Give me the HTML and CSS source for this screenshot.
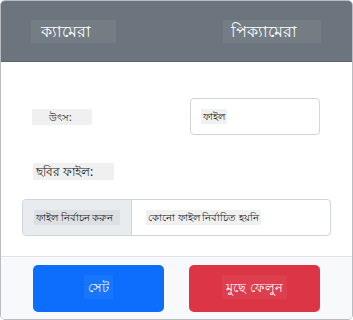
FILE: index.html
```html
<!DOCTYPE html>
<html lang="bn">
<head>
<meta charset="UTF-8" />
<title>ক্যামেরা</title>
<link rel="stylesheet" href="styles.css">
</head>
<body>

<div class="card">
  <div class="card-head">
    <span class="tab tab-cam">ক্যামেরা</span>
    <span class="tab tab-pi">পিক্যামেরা</span>
  </div>

  <div class="card-body">
    <div class="row-src">
      <span class="lbl small">উৎস:</span>
      <div class="select"><span class="lbl tiny">ফাইল</span></div>
    </div>

    <div class="row-img">
      <span class="lbl">ছবির ফাইল:</span>
    </div>

    <div class="file-input">
      <div class="file-btn"><span class="lbl tiny">ফাইল নির্বাচন করুন</span></div>
      <div class="file-name"><span class="lbl tiny">কোনো ফাইল নির্বাচিত হয়নি</span></div>
    </div>
  </div>

  <div class="card-foot">
    <button class="btn btn-blue"><span class="btn-txt">সেট</span></button>
    <button class="btn btn-red"><span class="btn-txt">মুছে ফেলুন</span></button>
  </div>
</div>

</body>
</html>
```

FILE: styles.css
```css
body {
  margin: 0;
  font-family: "Noto Sans", "DejaVu Sans", sans-serif;
  background: #fff;
}
.card {
  width: 351px;
  height: 318px;
  border: 1px solid #b9bcc0;
  border-radius: 5px;
  overflow: hidden;
  display: flex;
  flex-direction: column;
}
.card-head {
  background: #6c757d;
  height: 60px;
  display: flex;
  align-items: center;
  justify-content: space-between;
  padding: 0 31px 0 30px;
  border-bottom: 1px solid #5c636a;
}
.tab {
  background: rgba(255, 255, 255, 0.06);
  color: #fff;
  font-size: 16px;
  line-height: 23px;
  height: 23px;
  box-sizing: border-box;
}
.tab-cam {
  width: 85px;
  padding-left: 10px;
}
.tab-pi {
  width: 98px;
  padding-left: 8px;
}
.card-body {
  flex: 1;
  background: #fff;
  padding: 36px 21px 0 21px;
}
.lbl {
  background: #f0f0f0;
  color: #222;
  font-size: 12px;
  line-height: 17px;
  padding: 0 3px;
  display: inline-block;
}
.lbl.small {
  font-size: 10px;
  line-height: 16px;
  padding: 0 10px 0 17px;
  width: 33px;
}
.lbl.tiny {
  font-size: 10px;
  line-height: 15px;
  padding: 0 2px;
}
.row-src {
  display: flex;
  align-items: center;
  justify-content: space-between;
  padding: 0 11px 0 10px;
}
.select {
  width: 118px;
  height: 35px;
  border: 1px solid #ced4da;
  border-radius: 4px;
  padding: 0 0 0 10px;
  display: flex;
  align-items: center;
}
.row-img {
  padding: 24px 0 0 11px;
  height: 17px;
}
.row-img .lbl {
  width: 75px;
}
.file-input {
  margin-top: 23px;
  height: 35px;
  border: 1px solid #ced4da;
  border-radius: 4px;
  display: flex;
  overflow: hidden;
}
.file-btn {
  width: 108px;
  background: #e9ecef;
  border-right: 1px solid #ced4da;
  display: flex;
  align-items: center;
  justify-content: center;
}
.file-btn .lbl {
  background: #dde0e3;
  width: 82px;
  line-height: 15px;
}
.file-name {
  display: flex;
  align-items: center;
  padding-left: 14px;
}
.file-name .lbl {
  width: 111px;
}
.card-foot {
  height: 63px;
  background: #f8f9fa;
  border-top: 1px solid #dee2e6;
  display: flex;
  align-items: center;
  justify-content: space-between;
  padding: 0 32px 0 32px;
  box-sizing: border-box;
}
.btn {
  width: 131px;
  height: 47px;
  border: none;
  border-radius: 5px;
  color: #fff;
  font-family: inherit;
  font-size: 13px;
  padding: 0;
}
.btn-blue { background: #0d6efd; }
.btn-red { background: #dc3545; }
.btn-txt {
  background: rgba(255, 255, 255, 0.05);
  padding: 3px 4px;
}
```
